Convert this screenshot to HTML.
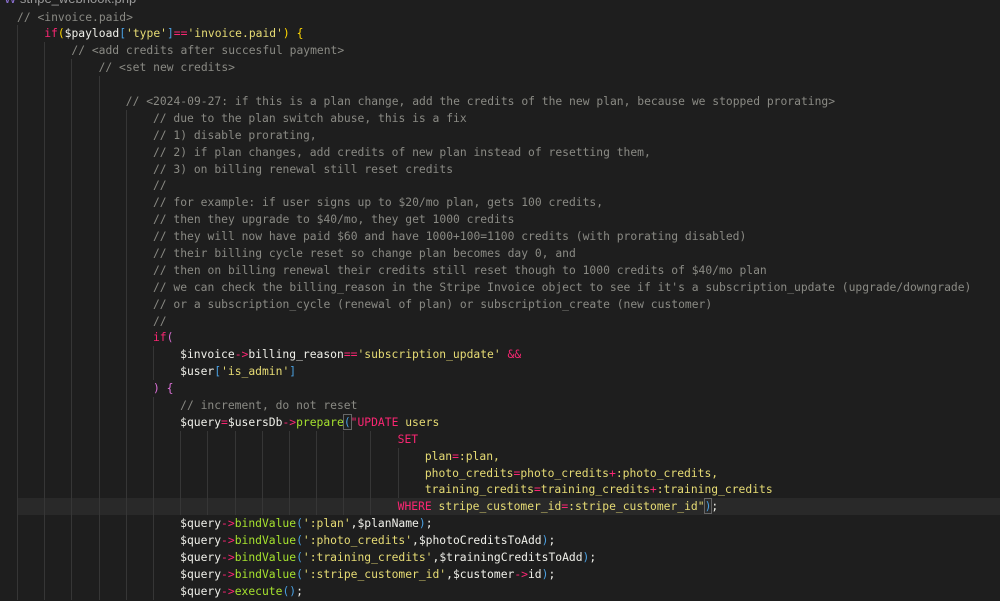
<!DOCTYPE html>
<html><head><meta charset="utf-8">
<style>
html,body{margin:0;padding:0;background:#1e1e1e;width:1000px;height:601px;overflow:hidden}
#ed{position:absolute;left:17px;top:8.5px;width:983px;font-family:"DejaVu Sans Mono","Liberation Mono",monospace;font-size:11.33px;color:#f0f0ea}
.l{height:16.9px;line-height:16.9px;position:relative;white-space:pre}
.i{display:inline-block;width:27.2px;height:16.9px;vertical-align:top;box-shadow:inset 1px 0 0 #363636}
.hl{background:#292929}
.c{color:#8a8a84}.k{color:#f92672}.s{color:#e6db74}.f{color:#a6e22e}.y{color:#ffd700}.b{color:#4a9fe0}.p{color:#da70d6}
#tab{position:absolute;left:4px;top:-9px;font-family:"Liberation Sans",sans-serif;font-size:13px;color:#9a9a9a}
</style></head><body>
<div id="tab"><span style="color:#8a6fd0">W</span> stripe_webhook.php</div>
<div id="ed"><div class="l"><span class="c">// &lt;invoice.paid&gt;</span></div><div class="l"><span class="i"></span><span class="k">if</span><span class="y">(</span>$payload<span class="b">[</span><span class="s">'type'</span><span class="b">]</span><span class="k">==</span><span class="s">'invoice.paid'</span><span class="y">)</span> <span class="y">{</span></div><div class="l"><span class="i"></span><span class="i"></span><span class="c">// &lt;add credits after succesful payment&gt;</span></div><div class="l"><span class="i"></span><span class="i"></span><span class="i"></span><span class="c">// &lt;set new credits&gt;</span></div><div class="l"><span class="i"></span><span class="i"></span><span class="i"></span><span class="i"></span></div><div class="l"><span class="i"></span><span class="i"></span><span class="i"></span><span class="i"></span><span class="c">// &lt;2024-09-27: if this is a plan change, add the credits of the new plan, because we stopped prorating&gt;</span></div><div class="l"><span class="i"></span><span class="i"></span><span class="i"></span><span class="i"></span><span class="i"></span><span class="c">// due to the plan switch abuse, this is a fix</span></div><div class="l"><span class="i"></span><span class="i"></span><span class="i"></span><span class="i"></span><span class="i"></span><span class="c">// 1) disable prorating,</span></div><div class="l"><span class="i"></span><span class="i"></span><span class="i"></span><span class="i"></span><span class="i"></span><span class="c">// 2) if plan changes, add credits of new plan instead of resetting them,</span></div><div class="l"><span class="i"></span><span class="i"></span><span class="i"></span><span class="i"></span><span class="i"></span><span class="c">// 3) on billing renewal still reset credits</span></div><div class="l"><span class="i"></span><span class="i"></span><span class="i"></span><span class="i"></span><span class="i"></span><span class="c">//</span></div><div class="l"><span class="i"></span><span class="i"></span><span class="i"></span><span class="i"></span><span class="i"></span><span class="c">// for example: if user signs up to $20/mo plan, gets 100 credits,</span></div><div class="l"><span class="i"></span><span class="i"></span><span class="i"></span><span class="i"></span><span class="i"></span><span class="c">// then they upgrade to $40/mo, they get 1000 credits</span></div><div class="l"><span class="i"></span><span class="i"></span><span class="i"></span><span class="i"></span><span class="i"></span><span class="c">// they will now have paid $60 and have 1000+100=1100 credits (with prorating disabled)</span></div><div class="l"><span class="i"></span><span class="i"></span><span class="i"></span><span class="i"></span><span class="i"></span><span class="c">// their billing cycle reset so change plan becomes day 0, and</span></div><div class="l"><span class="i"></span><span class="i"></span><span class="i"></span><span class="i"></span><span class="i"></span><span class="c">// then on billing renewal their credits still reset though to 1000 credits of $40/mo plan</span></div><div class="l"><span class="i"></span><span class="i"></span><span class="i"></span><span class="i"></span><span class="i"></span><span class="c">// we can check the billing_reason in the Stripe Invoice object to see if it's a subscription_update (upgrade/downgrade)</span></div><div class="l"><span class="i"></span><span class="i"></span><span class="i"></span><span class="i"></span><span class="i"></span><span class="c">// or a subscription_cycle (renewal of plan) or subscription_create (new customer)</span></div><div class="l"><span class="i"></span><span class="i"></span><span class="i"></span><span class="i"></span><span class="i"></span><span class="c">//</span></div><div class="l"><span class="i"></span><span class="i"></span><span class="i"></span><span class="i"></span><span class="i"></span><span class="k">if</span><span class="p">(</span></div><div class="l"><span class="i"></span><span class="i"></span><span class="i"></span><span class="i"></span><span class="i"></span><span class="i"></span>$invoice<span class="k">-&gt;</span>billing_reason<span class="k">==</span><span class="s">'subscription_update'</span> <span class="k">&amp;&amp;</span></div><div class="l"><span class="i"></span><span class="i"></span><span class="i"></span><span class="i"></span><span class="i"></span><span class="i"></span>$user<span class="b">[</span><span class="s">'is_admin'</span><span class="b">]</span></div><div class="l"><span class="i"></span><span class="i"></span><span class="i"></span><span class="i"></span><span class="i"></span><span class="p">)</span> <span class="p">{</span></div><div class="l"><span class="i"></span><span class="i"></span><span class="i"></span><span class="i"></span><span class="i"></span><span class="i"></span><span class="c">// increment, do not reset</span></div><div class="l"><span class="i"></span><span class="i"></span><span class="i"></span><span class="i"></span><span class="i"></span><span class="i"></span>$query<span class="k">=</span>$usersDb<span class="k">-&gt;</span><span class="f">prepare</span><span class="b" style="outline:1px solid #666">(</span><span class="k">"UPDATE</span><span class="s"> users</span></div><div class="l"><span class="i"></span><span class="i"></span><span class="i"></span><span class="i"></span><span class="i"></span><span class="i"></span><span class="i"></span><span class="i"></span><span class="i"></span><span class="i"></span><span class="i"></span><span class="i"></span><span class="i"></span><span class="i"></span><span class="k">SET</span></div><div class="l"><span class="i"></span><span class="i"></span><span class="i"></span><span class="i"></span><span class="i"></span><span class="i"></span><span class="i"></span><span class="i"></span><span class="i"></span><span class="i"></span><span class="i"></span><span class="i"></span><span class="i"></span><span class="i"></span><span class="i"></span><span class="s">plan<span class="k">=</span>:plan,</span></div><div class="l"><span class="i"></span><span class="i"></span><span class="i"></span><span class="i"></span><span class="i"></span><span class="i"></span><span class="i"></span><span class="i"></span><span class="i"></span><span class="i"></span><span class="i"></span><span class="i"></span><span class="i"></span><span class="i"></span><span class="i"></span><span class="s">photo_credits<span class="k">=</span>photo_credits<span class="k">+</span>:photo_credits,</span></div><div class="l"><span class="i"></span><span class="i"></span><span class="i"></span><span class="i"></span><span class="i"></span><span class="i"></span><span class="i"></span><span class="i"></span><span class="i"></span><span class="i"></span><span class="i"></span><span class="i"></span><span class="i"></span><span class="i"></span><span class="i"></span><span class="s">training_credits<span class="k">=</span>training_credits<span class="k">+</span>:training_credits</span></div><div class="l hl"><span class="i"></span><span class="i"></span><span class="i"></span><span class="i"></span><span class="i"></span><span class="i"></span><span class="i"></span><span class="i"></span><span class="i"></span><span class="i"></span><span class="i"></span><span class="i"></span><span class="i"></span><span class="i"></span><span class="k">WHERE</span><span class="s"> stripe_customer_id<span class="k">=</span>:stripe_customer_id"</span><span class="b" style="outline:1px solid #666">)</span>;</div><div class="l"><span class="i"></span><span class="i"></span><span class="i"></span><span class="i"></span><span class="i"></span><span class="i"></span>$query<span class="k">-&gt;</span><span class="f">bindValue</span><span class="b">(</span><span class="s">':plan'</span>,$planName<span class="b">)</span>;</div><div class="l"><span class="i"></span><span class="i"></span><span class="i"></span><span class="i"></span><span class="i"></span><span class="i"></span>$query<span class="k">-&gt;</span><span class="f">bindValue</span><span class="b">(</span><span class="s">':photo_credits'</span>,$photoCreditsToAdd<span class="b">)</span>;</div><div class="l"><span class="i"></span><span class="i"></span><span class="i"></span><span class="i"></span><span class="i"></span><span class="i"></span>$query<span class="k">-&gt;</span><span class="f">bindValue</span><span class="b">(</span><span class="s">':training_credits'</span>,$trainingCreditsToAdd<span class="b">)</span>;</div><div class="l"><span class="i"></span><span class="i"></span><span class="i"></span><span class="i"></span><span class="i"></span><span class="i"></span>$query<span class="k">-&gt;</span><span class="f">bindValue</span><span class="b">(</span><span class="s">':stripe_customer_id'</span>,$customer<span class="k">-&gt;</span>id<span class="b">)</span>;</div><div class="l"><span class="i"></span><span class="i"></span><span class="i"></span><span class="i"></span><span class="i"></span><span class="i"></span>$query<span class="k">-&gt;</span><span class="f">execute</span><span class="b">()</span>;</div></div>
</body></html>
